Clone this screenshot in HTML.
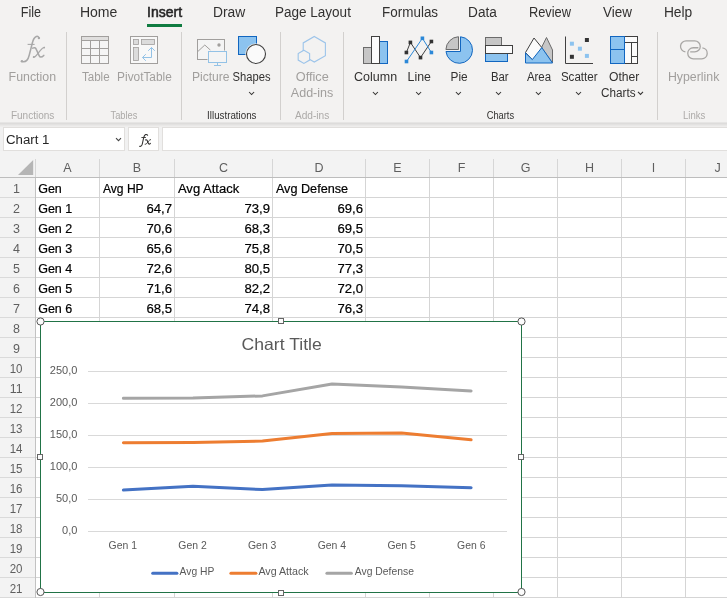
<!DOCTYPE html>
<html><head><meta charset="utf-8"><title>Excel</title>
<style>html,body{margin:0;padding:0;background:#fff;overflow:hidden;} svg{display:block;will-change:transform;font-family:"Liberation Sans",sans-serif;}</style>
</head><body>
<svg width="727" height="598" viewBox="0 0 727 598" font-family="Liberation Sans, sans-serif"><rect x="0" y="0" width="727" height="122" fill="#f3f2f1"/>
<rect x="0" y="122" width="727" height="1" fill="#e6e5e4"/>
<rect x="0" y="123" width="727" height="1" fill="#dddcdb"/>
<rect x="0" y="124" width="727" height="1" fill="#e3e2e1"/>
<rect x="0" y="125" width="727" height="1" fill="#e9e8e7"/>
<rect x="0" y="126" width="727" height="1" fill="#eeedec"/>
<rect x="0" y="127" width="727" height="24" fill="#f1f1f1"/>
<rect x="0" y="151" width="727" height="27" fill="#f3f3f3"/>
<rect x="0" y="178" width="35" height="420" fill="#f3f3f3"/>
<rect x="36" y="178" width="691" height="420" fill="#ffffff"/>
<text x="20.8" y="17.3" font-size="14" fill="#323130" textLength="20.3" lengthAdjust="spacingAndGlyphs">File</text>
<text x="79.9" y="17.3" font-size="14" fill="#323130" textLength="37.5" lengthAdjust="spacingAndGlyphs">Home</text>
<text x="147.0" y="17.3" font-size="14" fill="#262626" textLength="35.1" lengthAdjust="spacingAndGlyphs" stroke="#262626" stroke-width="0.55">Insert</text>
<text x="212.9" y="17.3" font-size="14" fill="#323130" textLength="32.3" lengthAdjust="spacingAndGlyphs">Draw</text>
<text x="274.9" y="17.3" font-size="14" fill="#323130" textLength="76.0" lengthAdjust="spacingAndGlyphs">Page Layout</text>
<text x="382.1" y="17.3" font-size="14" fill="#323130" textLength="56.0" lengthAdjust="spacingAndGlyphs">Formulas</text>
<text x="468.1" y="17.3" font-size="14" fill="#323130" textLength="28.8" lengthAdjust="spacingAndGlyphs">Data</text>
<text x="528.9" y="17.3" font-size="14" fill="#323130" textLength="42.1" lengthAdjust="spacingAndGlyphs">Review</text>
<text x="603.1" y="17.3" font-size="14" fill="#323130" textLength="28.9" lengthAdjust="spacingAndGlyphs">View</text>
<text x="663.9" y="17.3" font-size="14" fill="#323130" textLength="28.4" lengthAdjust="spacingAndGlyphs">Help</text>
<rect x="147" y="24" width="35" height="3" fill="#107c41"/>
<rect x="66.0" y="32" width="1" height="88" fill="#d2d0ce"/>
<rect x="181.0" y="32" width="1" height="88" fill="#d2d0ce"/>
<rect x="280.0" y="32" width="1" height="88" fill="#d2d0ce"/>
<rect x="343.0" y="32" width="1" height="88" fill="#d2d0ce"/>
<rect x="657.0" y="32" width="1" height="88" fill="#d2d0ce"/>
<text x="8.6" y="80.7" font-size="12" fill="#a19f9d" textLength="47.5" lengthAdjust="spacingAndGlyphs">Function</text>
<text x="81.9" y="80.7" font-size="12" fill="#a19f9d" textLength="27.7" lengthAdjust="spacingAndGlyphs">Table</text>
<text x="117.1" y="80.7" font-size="12" fill="#a19f9d" textLength="54.7" lengthAdjust="spacingAndGlyphs">PivotTable</text>
<text x="191.9" y="80.7" font-size="12" fill="#a19f9d" textLength="37.7" lengthAdjust="spacingAndGlyphs">Picture</text>
<text x="232.6" y="80.7" font-size="12" fill="#323130" textLength="38.0" lengthAdjust="spacingAndGlyphs">Shapes</text>
<text x="295.8" y="80.7" font-size="12" fill="#a19f9d" textLength="33.0" lengthAdjust="spacingAndGlyphs">Office</text>
<text x="290.8" y="96.6" font-size="12" fill="#a19f9d" textLength="42.5" lengthAdjust="spacingAndGlyphs">Add-ins</text>
<text x="354.1" y="80.7" font-size="12" fill="#323130" textLength="43.0" lengthAdjust="spacingAndGlyphs">Column</text>
<text x="407.6" y="80.7" font-size="12" fill="#323130" textLength="23.3" lengthAdjust="spacingAndGlyphs">Line</text>
<text x="450.6" y="80.7" font-size="12" fill="#323130" textLength="17.1" lengthAdjust="spacingAndGlyphs">Pie</text>
<text x="490.9" y="80.7" font-size="12" fill="#323130" textLength="17.7" lengthAdjust="spacingAndGlyphs">Bar</text>
<text x="526.9" y="80.7" font-size="12" fill="#323130" textLength="24.2" lengthAdjust="spacingAndGlyphs">Area</text>
<text x="560.9" y="80.7" font-size="12" fill="#323130" textLength="36.7" lengthAdjust="spacingAndGlyphs">Scatter</text>
<text x="609.0" y="80.7" font-size="12" fill="#323130" textLength="30.4" lengthAdjust="spacingAndGlyphs">Other</text>
<text x="601.1" y="96.6" font-size="12" fill="#323130" textLength="34.5" lengthAdjust="spacingAndGlyphs">Charts</text>
<text x="667.9" y="80.7" font-size="12" fill="#a19f9d" textLength="51.5" lengthAdjust="spacingAndGlyphs">Hyperlink</text>
<text x="10.9" y="118.6" font-size="10" fill="#acaaa8" textLength="43.4" lengthAdjust="spacingAndGlyphs">Functions</text>
<text x="110.5" y="118.6" font-size="10" fill="#acaaa8" textLength="26.9" lengthAdjust="spacingAndGlyphs">Tables</text>
<text x="207.1" y="118.6" font-size="10" fill="#323130" textLength="49.4" lengthAdjust="spacingAndGlyphs">Illustrations</text>
<text x="294.9" y="118.6" font-size="10" fill="#acaaa8" textLength="34.4" lengthAdjust="spacingAndGlyphs">Add-ins</text>
<text x="486.7" y="118.6" font-size="10" fill="#323130" textLength="27.4" lengthAdjust="spacingAndGlyphs">Charts</text>
<text x="683.0" y="118.6" font-size="10" fill="#acaaa8" textLength="22.3" lengthAdjust="spacingAndGlyphs">Links</text>
<path d="M249.1,92.0 L251.6,94.5 L254.1,92.0" fill="none" stroke="#323130" stroke-width="1.05"/>
<path d="M372.9,92.0 L375.4,94.5 L377.9,92.0" fill="none" stroke="#323130" stroke-width="1.05"/>
<path d="M416.1,92.0 L418.6,94.5 L421.1,92.0" fill="none" stroke="#323130" stroke-width="1.05"/>
<path d="M455.9,92.0 L458.4,94.5 L460.9,92.0" fill="none" stroke="#323130" stroke-width="1.05"/>
<path d="M496.0,92.0 L498.5,94.5 L501.0,92.0" fill="none" stroke="#323130" stroke-width="1.05"/>
<path d="M535.9,92.0 L538.4,94.5 L540.9,92.0" fill="none" stroke="#323130" stroke-width="1.05"/>
<path d="M576.0,92.0 L578.5,94.5 L581.0,92.0" fill="none" stroke="#323130" stroke-width="1.05"/>
<path d="M638.0,91.9 L640.5,94.4 L643.0,91.9" fill="none" stroke="#323130" stroke-width="1.05"/>
<path d="M38.9,37.6 C38.3,36.4 37.3,36.1 36.3,36.5 C34.2,37.4 33.1,39.8 32.4,42.8 L29.2,55.2 C28.2,59.3 25.6,62.3 22.2,61.6" fill="none" stroke="#a8a8a8" stroke-width="1.5" stroke-linecap="round"/>
<circle cx="38.9" cy="38.1" r="1.2" fill="#a8a8a8"/>
<circle cx="21.9" cy="61.3" r="1.2" fill="#a8a8a8"/>
<path d="M27.6,44.4 H34.6" fill="none" stroke="#a8a8a8" stroke-width="1.1"/>
<path d="M32.6,48.2 C34.4,47.2 35.6,47.6 36.4,49.6 L39.1,55.6 C39.9,57.4 41.4,57.9 43.8,55.4" fill="none" stroke="#a8a8a8" stroke-width="1.5" stroke-linecap="round"/>
<path d="M44.4,47.4 C43,47.6 42,48.4 40.2,50.6 L36.4,55.4 C35.4,56.7 34.4,57.2 33.4,57" fill="none" stroke="#a8a8a8" stroke-width="1.2" stroke-linecap="round"/>
<circle cx="44.2" cy="47.6" r="0.9" fill="#a8a8a8"/>
<circle cx="33.8" cy="56.9" r="1.0" fill="#a8a8a8"/>
<rect x="81.5" y="36.5" width="27" height="27" fill="#f5f5f5" stroke="#a19f9d"/>
<rect x="82" y="37" width="26" height="3.5" fill="#e0dfde"/>
<path d="M82,40.5 H108 M82,48.5 H108 M82,55.5 H108 M90.5,40.5 V63 M99.5,40.5 V63" stroke="#a19f9d" stroke-width="1" fill="none"/>
<rect x="130.5" y="36.5" width="27" height="27" fill="#f8f8f8" stroke="#a19f9d"/>
<rect x="133.5" y="39.5" width="5" height="5" fill="#dcdcdc" stroke="#a19f9d" stroke-width="0.8"/>
<rect x="141.5" y="39.5" width="13" height="5" fill="#dcdcdc" stroke="#a19f9d" stroke-width="0.8"/>
<rect x="133.5" y="47.5" width="5" height="13" fill="#dcdcdc" stroke="#a19f9d" stroke-width="0.8"/>
<path d="M142.5,57.5 H151.5 V47.5 M145.8,54.2 L142.5,57.5 L145.8,60.8 M148.2,50.8 L151.5,47.5 L154.8,50.8" stroke="#93c2e6" stroke-width="1" fill="none"/>
<rect x="197.5" y="39.5" width="27" height="20" fill="#f4f4f4" stroke="#a19f9d"/>
<path d="M197.5,51.8 L204.8,45 L210.5,50.2" stroke="#a19f9d" fill="none"/>
<circle cx="219" cy="45" r="1.7" fill="#a19f9d"/>
<rect x="207.5" y="50.5" width="20" height="13" fill="#f3f2f1"/>
<rect x="208.5" y="51.5" width="18" height="11" fill="#f4f4f4" stroke="#93c2e6"/>
<path d="M217.5,63 V65 M214,65.5 H221" stroke="#93c2e6" fill="none"/>
<rect x="238.5" y="36.5" width="18" height="18" fill="#8cc3ef" stroke="#1166c0" stroke-width="1"/>
<circle cx="256" cy="54" r="10.6" fill="#f3f2f1"/>
<circle cx="256" cy="54" r="9.5" fill="#fafafa" stroke="#404040" stroke-width="1.1"/>
<path d="M314.30,36.50 L325.39,42.90 L325.39,55.70 L314.30,62.10 L303.21,55.70 L303.21,42.90Z" fill="none" stroke="#9cc4ea" stroke-width="1.1"/>
<path d="M303.90,50.20 L309.62,53.50 L309.62,60.10 L303.90,63.40 L298.18,60.10 L298.18,53.50Z" fill="#f3f2f1" stroke="#9cc4ea" stroke-width="1.1"/>
<rect x="363.5" y="47.5" width="8" height="16" fill="#c6c6c6" stroke="#6b6b6b"/>
<rect x="379.5" y="41.5" width="8" height="22" fill="#8cc3ef" stroke="#1166c0"/>
<rect x="371.5" y="36.5" width="8" height="27" fill="#fbfbfb" stroke="#404040"/>
<path d="M406.4,52.5 L410.4,42.4 L420.5,57.6 L431.4,41.5" fill="none" stroke="#404040" stroke-width="1"/>
<path d="M406.5,61.5 L422.4,38.3 L431.4,52.5" fill="none" stroke="#2b88d8" stroke-width="1"/>
<rect x="404.6" y="50.7" width="3.6" height="3.6" fill="#333"/>
<rect x="408.6" y="40.6" width="3.6" height="3.6" fill="#333"/>
<rect x="418.7" y="55.8" width="3.6" height="3.6" fill="#333"/>
<rect x="429.6" y="39.7" width="3.6" height="3.6" fill="#333"/>
<rect x="404.7" y="59.7" width="3.6" height="3.6" fill="#2b88d8"/>
<rect x="420.6" y="36.5" width="3.6" height="3.6" fill="#2b88d8"/>
<rect x="429.6" y="50.7" width="3.6" height="3.6" fill="#2b88d8"/>
<path d="M460.5,36.76 A13.3,13.3 0 1 1 445.98,51.5 L460.5,51.5 Z" fill="#8cc3ef" stroke="#1166c0" stroke-width="1"/>
<path d="M458.5,49.5 V36.72 A13.3,13.3 0 0 0 445.91,49.5 Z" fill="#c6c6c6" stroke="#6b6b6b" stroke-width="1"/>
<rect x="485.5" y="37.5" width="16" height="8" fill="#c6c6c6" stroke="#6b6b6b"/>
<rect x="485.5" y="53.5" width="22" height="8" fill="#8cc3ef" stroke="#1166c0"/>
<rect x="485.5" y="45.5" width="27" height="8" fill="#fbfbfb" stroke="#404040"/>
<path d="M541.5,47.5 L546.5,37.5 L552.5,50 V63 Z" fill="#c6c6c6" stroke="#6b6b6b"/>
<path d="M525.5,52.5 L534,38 L541.8,47.6 L538,56 L532.3,59.6 Z" fill="#fbfbfb" stroke="#404040"/>
<path d="M525.5,53 L532.3,59.6 L541.8,47.6 L552.5,63 H525.5 Z" fill="#8cc3ef" stroke="#1166c0"/>
<path d="M565.5,36.5 V63.5 H593" fill="none" stroke="#404040"/>
<rect x="569.9" y="41.7" width="4" height="4" fill="#8cc3ef"/>
<rect x="577.9" y="46.7" width="4" height="4" fill="#8cc3ef"/>
<rect x="584.9" y="53.9" width="4" height="4" fill="#8cc3ef"/>
<rect x="584.9" y="38" width="4" height="4" fill="#333"/>
<rect x="569.9" y="54.8" width="4" height="4" fill="#333"/>
<rect x="610.5" y="36.5" width="27" height="27" fill="#fbfbfb" stroke="#404040"/>
<rect x="610.5" y="36.5" width="14" height="27" fill="#8cc3ef" stroke="#1166c0"/>
<path d="M610.5,49.5 H624.5" stroke="#1166c0"/>
<path d="M625,42.5 H637.5 M631.5,42.5 V63.5 M631.5,56.5 H637.5" stroke="#404040" fill="none"/>
<path d="M685.4,51.9 A5.55,5.55 0 0 1 686.4,40.85 H694.7 A5.55,5.55 0 0 1 694.7,51.95 H690.2" fill="none" stroke="#a8a6a4" stroke-width="1.3"/>
<path d="M698.4,47.75 H693.3 A5.55,5.55 0 0 0 693.3,58.85 H701.8 A5.55,5.55 0 0 0 702.4,47.8" fill="none" stroke="#a8a6a4" stroke-width="1.3"/>
<rect x="3.5" y="127.5" width="121" height="23" fill="#fff" stroke="#e1dfdd"/>
<text x="6.0" y="144" font-size="12.5" fill="#262626" textLength="43.5" lengthAdjust="spacingAndGlyphs">Chart 1</text>
<path d="M116,138.2 L118.5,140.7 L121,138.2" fill="none" stroke="#444" stroke-width="1.1"/>
<rect x="128.5" y="127.5" width="30" height="23" fill="#fff" stroke="#e1dfdd"/>
<path d="M147.6,135.2 C147.2,134.5 146.4,134.3 145.6,134.6 C144.6,135.1 144,136.4 143.6,138 L142.3,144 C141.9,145.8 140.8,146.6 139.6,146.3" fill="none" stroke="#323130" stroke-width="1.1" stroke-linecap="round"/>
<path d="M141.4,137.5 H145.9" fill="none" stroke="#323130" stroke-width="0.9"/>
<path d="M145.4,139.9 C146.3,139.5 146.9,139.8 147.3,140.7 L148.3,143.3 C148.7,144.3 149.5,144.4 150.4,143.4" fill="none" stroke="#323130" stroke-width="1.1" stroke-linecap="round"/>
<path d="M150.6,139.6 C149.8,139.8 149.3,140.3 148.4,141.3 L146.8,143.4 C146.3,144.1 145.7,144.4 145.1,144.3" fill="none" stroke="#323130" stroke-width="0.9" stroke-linecap="round"/>
<rect x="162.5" y="127.5" width="570" height="23" fill="#fff" stroke="#e1dfdd"/>
<rect x="99" y="159" width="1" height="19" fill="#d6d6d6"/>
<rect x="174" y="159" width="1" height="19" fill="#d6d6d6"/>
<rect x="272" y="159" width="1" height="19" fill="#d6d6d6"/>
<rect x="365" y="159" width="1" height="19" fill="#d6d6d6"/>
<rect x="429" y="159" width="1" height="19" fill="#d6d6d6"/>
<rect x="493" y="159" width="1" height="19" fill="#d6d6d6"/>
<rect x="557" y="159" width="1" height="19" fill="#d6d6d6"/>
<rect x="621" y="159" width="1" height="19" fill="#d6d6d6"/>
<rect x="685" y="159" width="1" height="19" fill="#d6d6d6"/>
<rect x="749" y="159" width="1" height="19" fill="#d6d6d6"/>
<rect x="35" y="159" width="1" height="18" fill="#d6d6d6"/>
<rect x="35" y="178" width="1" height="420" fill="#c2c2c2"/>
<rect x="0" y="177" width="727" height="1" fill="#bdbdbd"/>
<path d="M33.2,160 V175 H18 Z" fill="#b5b5b5"/>
<text x="67.5" y="172" font-size="12.5" fill="#5f5f5f" text-anchor="middle">A</text>
<text x="137.0" y="172" font-size="12.5" fill="#5f5f5f" text-anchor="middle">B</text>
<text x="223.5" y="172" font-size="12.5" fill="#5f5f5f" text-anchor="middle">C</text>
<text x="319.0" y="172" font-size="12.5" fill="#5f5f5f" text-anchor="middle">D</text>
<text x="397.5" y="172" font-size="12.5" fill="#5f5f5f" text-anchor="middle">E</text>
<text x="461.5" y="172" font-size="12.5" fill="#5f5f5f" text-anchor="middle">F</text>
<text x="525.5" y="172" font-size="12.5" fill="#5f5f5f" text-anchor="middle">G</text>
<text x="589.5" y="172" font-size="12.5" fill="#5f5f5f" text-anchor="middle">H</text>
<text x="653.5" y="172" font-size="12.5" fill="#5f5f5f" text-anchor="middle">I</text>
<text x="717.5" y="172" font-size="12.5" fill="#5f5f5f" text-anchor="middle">J</text>
<rect x="99" y="178" width="1" height="420" fill="#d5d5d5"/>
<rect x="174" y="178" width="1" height="420" fill="#d5d5d5"/>
<rect x="272" y="178" width="1" height="420" fill="#d5d5d5"/>
<rect x="365" y="178" width="1" height="420" fill="#d5d5d5"/>
<rect x="429" y="178" width="1" height="420" fill="#d5d5d5"/>
<rect x="493" y="178" width="1" height="420" fill="#d5d5d5"/>
<rect x="557" y="178" width="1" height="420" fill="#d5d5d5"/>
<rect x="621" y="178" width="1" height="420" fill="#d5d5d5"/>
<rect x="685" y="178" width="1" height="420" fill="#d5d5d5"/>
<rect x="749" y="178" width="1" height="420" fill="#d5d5d5"/>
<rect x="0" y="197" width="35" height="1" fill="#dadada"/>
<rect x="36" y="197" width="691" height="1" fill="#d5d5d5"/>
<text x="16.5" y="192.9" font-size="12.5" fill="#5f5f5f" text-anchor="middle">1</text>
<rect x="0" y="217" width="35" height="1" fill="#dadada"/>
<rect x="36" y="217" width="691" height="1" fill="#d5d5d5"/>
<text x="16.5" y="212.9" font-size="12.5" fill="#5f5f5f" text-anchor="middle">2</text>
<rect x="0" y="237" width="35" height="1" fill="#dadada"/>
<rect x="36" y="237" width="691" height="1" fill="#d5d5d5"/>
<text x="16.5" y="232.9" font-size="12.5" fill="#5f5f5f" text-anchor="middle">3</text>
<rect x="0" y="257" width="35" height="1" fill="#dadada"/>
<rect x="36" y="257" width="691" height="1" fill="#d5d5d5"/>
<text x="16.5" y="252.9" font-size="12.5" fill="#5f5f5f" text-anchor="middle">4</text>
<rect x="0" y="277" width="35" height="1" fill="#dadada"/>
<rect x="36" y="277" width="691" height="1" fill="#d5d5d5"/>
<text x="16.5" y="272.9" font-size="12.5" fill="#5f5f5f" text-anchor="middle">5</text>
<rect x="0" y="297" width="35" height="1" fill="#dadada"/>
<rect x="36" y="297" width="691" height="1" fill="#d5d5d5"/>
<text x="16.5" y="292.9" font-size="12.5" fill="#5f5f5f" text-anchor="middle">6</text>
<rect x="0" y="317" width="35" height="1" fill="#dadada"/>
<rect x="36" y="317" width="691" height="1" fill="#d5d5d5"/>
<text x="16.5" y="312.9" font-size="12.5" fill="#5f5f5f" text-anchor="middle">7</text>
<rect x="0" y="337" width="35" height="1" fill="#dadada"/>
<rect x="36" y="337" width="691" height="1" fill="#d5d5d5"/>
<text x="16.5" y="332.9" font-size="12.5" fill="#5f5f5f" text-anchor="middle">8</text>
<rect x="0" y="357" width="35" height="1" fill="#dadada"/>
<rect x="36" y="357" width="691" height="1" fill="#d5d5d5"/>
<text x="16.5" y="352.9" font-size="12.5" fill="#5f5f5f" text-anchor="middle">9</text>
<rect x="0" y="377" width="35" height="1" fill="#dadada"/>
<rect x="36" y="377" width="691" height="1" fill="#d5d5d5"/>
<text x="9.7" y="372.9" font-size="12.5" fill="#5f5f5f" textLength="12.8" lengthAdjust="spacingAndGlyphs">10</text>
<rect x="0" y="397" width="35" height="1" fill="#dadada"/>
<rect x="36" y="397" width="691" height="1" fill="#d5d5d5"/>
<text x="9.7" y="392.9" font-size="12.5" fill="#5f5f5f" textLength="12.8" lengthAdjust="spacingAndGlyphs">11</text>
<rect x="0" y="417" width="35" height="1" fill="#dadada"/>
<rect x="36" y="417" width="691" height="1" fill="#d5d5d5"/>
<text x="9.7" y="412.9" font-size="12.5" fill="#5f5f5f" textLength="12.8" lengthAdjust="spacingAndGlyphs">12</text>
<rect x="0" y="437" width="35" height="1" fill="#dadada"/>
<rect x="36" y="437" width="691" height="1" fill="#d5d5d5"/>
<text x="9.7" y="432.9" font-size="12.5" fill="#5f5f5f" textLength="12.8" lengthAdjust="spacingAndGlyphs">13</text>
<rect x="0" y="457" width="35" height="1" fill="#dadada"/>
<rect x="36" y="457" width="691" height="1" fill="#d5d5d5"/>
<text x="9.7" y="452.9" font-size="12.5" fill="#5f5f5f" textLength="12.8" lengthAdjust="spacingAndGlyphs">14</text>
<rect x="0" y="477" width="35" height="1" fill="#dadada"/>
<rect x="36" y="477" width="691" height="1" fill="#d5d5d5"/>
<text x="9.7" y="472.9" font-size="12.5" fill="#5f5f5f" textLength="12.8" lengthAdjust="spacingAndGlyphs">15</text>
<rect x="0" y="497" width="35" height="1" fill="#dadada"/>
<rect x="36" y="497" width="691" height="1" fill="#d5d5d5"/>
<text x="9.7" y="492.9" font-size="12.5" fill="#5f5f5f" textLength="12.8" lengthAdjust="spacingAndGlyphs">16</text>
<rect x="0" y="517" width="35" height="1" fill="#dadada"/>
<rect x="36" y="517" width="691" height="1" fill="#d5d5d5"/>
<text x="9.7" y="512.9" font-size="12.5" fill="#5f5f5f" textLength="12.8" lengthAdjust="spacingAndGlyphs">17</text>
<rect x="0" y="537" width="35" height="1" fill="#dadada"/>
<rect x="36" y="537" width="691" height="1" fill="#d5d5d5"/>
<text x="9.7" y="532.9" font-size="12.5" fill="#5f5f5f" textLength="12.8" lengthAdjust="spacingAndGlyphs">18</text>
<rect x="0" y="557" width="35" height="1" fill="#dadada"/>
<rect x="36" y="557" width="691" height="1" fill="#d5d5d5"/>
<text x="9.7" y="552.9" font-size="12.5" fill="#5f5f5f" textLength="12.8" lengthAdjust="spacingAndGlyphs">19</text>
<rect x="0" y="577" width="35" height="1" fill="#dadada"/>
<rect x="36" y="577" width="691" height="1" fill="#d5d5d5"/>
<text x="9.7" y="572.9" font-size="12.5" fill="#5f5f5f" textLength="12.8" lengthAdjust="spacingAndGlyphs">20</text>
<rect x="0" y="597" width="35" height="1" fill="#dadada"/>
<rect x="36" y="597" width="691" height="1" fill="#d5d5d5"/>
<text x="9.7" y="592.9" font-size="12.5" fill="#5f5f5f" textLength="12.8" lengthAdjust="spacingAndGlyphs">21</text>
<text x="38.2" y="193.1" font-size="12.5" fill="#000000" stroke="#000" stroke-width="0.2">Gen</text>
<text x="102.9" y="193.1" font-size="12.5" fill="#000000" textLength="40.800000000000004" lengthAdjust="spacingAndGlyphs" stroke="#000" stroke-width="0.2">Avg HP</text>
<text x="177.9" y="193.1" font-size="12.5" fill="#000000" textLength="61.4" lengthAdjust="spacingAndGlyphs" stroke="#000" stroke-width="0.2">Avg Attack</text>
<text x="275.9" y="193.1" font-size="12.5" fill="#000000" textLength="72.19999999999999" lengthAdjust="spacingAndGlyphs" stroke="#000" stroke-width="0.2">Avg Defense</text>
<text x="38.2" y="213.1" font-size="12.5" fill="#000000" stroke="#000" stroke-width="0.2">Gen 1</text>
<text x="172.0" y="213.1" font-size="12.5" fill="#000000" textLength="25.6" lengthAdjust="spacingAndGlyphs" text-anchor="end" stroke="#000" stroke-width="0.2">64,7</text>
<text x="270.0" y="213.1" font-size="12.5" fill="#000000" textLength="25.6" lengthAdjust="spacingAndGlyphs" text-anchor="end" stroke="#000" stroke-width="0.2">73,9</text>
<text x="363.0" y="213.1" font-size="12.5" fill="#000000" textLength="25.6" lengthAdjust="spacingAndGlyphs" text-anchor="end" stroke="#000" stroke-width="0.2">69,6</text>
<text x="38.2" y="233.1" font-size="12.5" fill="#000000" stroke="#000" stroke-width="0.2">Gen 2</text>
<text x="172.0" y="233.1" font-size="12.5" fill="#000000" textLength="25.6" lengthAdjust="spacingAndGlyphs" text-anchor="end" stroke="#000" stroke-width="0.2">70,6</text>
<text x="270.0" y="233.1" font-size="12.5" fill="#000000" textLength="25.6" lengthAdjust="spacingAndGlyphs" text-anchor="end" stroke="#000" stroke-width="0.2">68,3</text>
<text x="363.0" y="233.1" font-size="12.5" fill="#000000" textLength="25.6" lengthAdjust="spacingAndGlyphs" text-anchor="end" stroke="#000" stroke-width="0.2">69,5</text>
<text x="38.2" y="253.1" font-size="12.5" fill="#000000" stroke="#000" stroke-width="0.2">Gen 3</text>
<text x="172.0" y="253.1" font-size="12.5" fill="#000000" textLength="25.6" lengthAdjust="spacingAndGlyphs" text-anchor="end" stroke="#000" stroke-width="0.2">65,6</text>
<text x="270.0" y="253.1" font-size="12.5" fill="#000000" textLength="25.6" lengthAdjust="spacingAndGlyphs" text-anchor="end" stroke="#000" stroke-width="0.2">75,8</text>
<text x="363.0" y="253.1" font-size="12.5" fill="#000000" textLength="25.6" lengthAdjust="spacingAndGlyphs" text-anchor="end" stroke="#000" stroke-width="0.2">70,5</text>
<text x="38.2" y="273.1" font-size="12.5" fill="#000000" stroke="#000" stroke-width="0.2">Gen 4</text>
<text x="172.0" y="273.1" font-size="12.5" fill="#000000" textLength="25.6" lengthAdjust="spacingAndGlyphs" text-anchor="end" stroke="#000" stroke-width="0.2">72,6</text>
<text x="270.0" y="273.1" font-size="12.5" fill="#000000" textLength="25.6" lengthAdjust="spacingAndGlyphs" text-anchor="end" stroke="#000" stroke-width="0.2">80,5</text>
<text x="363.0" y="273.1" font-size="12.5" fill="#000000" textLength="25.6" lengthAdjust="spacingAndGlyphs" text-anchor="end" stroke="#000" stroke-width="0.2">77,3</text>
<text x="38.2" y="293.1" font-size="12.5" fill="#000000" stroke="#000" stroke-width="0.2">Gen 5</text>
<text x="172.0" y="293.1" font-size="12.5" fill="#000000" textLength="25.6" lengthAdjust="spacingAndGlyphs" text-anchor="end" stroke="#000" stroke-width="0.2">71,6</text>
<text x="270.0" y="293.1" font-size="12.5" fill="#000000" textLength="25.6" lengthAdjust="spacingAndGlyphs" text-anchor="end" stroke="#000" stroke-width="0.2">82,2</text>
<text x="363.0" y="293.1" font-size="12.5" fill="#000000" textLength="25.6" lengthAdjust="spacingAndGlyphs" text-anchor="end" stroke="#000" stroke-width="0.2">72,0</text>
<text x="38.2" y="313.1" font-size="12.5" fill="#000000" stroke="#000" stroke-width="0.2">Gen 6</text>
<text x="172.0" y="313.1" font-size="12.5" fill="#000000" textLength="25.6" lengthAdjust="spacingAndGlyphs" text-anchor="end" stroke="#000" stroke-width="0.2">68,5</text>
<text x="270.0" y="313.1" font-size="12.5" fill="#000000" textLength="25.6" lengthAdjust="spacingAndGlyphs" text-anchor="end" stroke="#000" stroke-width="0.2">74,8</text>
<text x="363.0" y="313.1" font-size="12.5" fill="#000000" textLength="25.6" lengthAdjust="spacingAndGlyphs" text-anchor="end" stroke="#000" stroke-width="0.2">76,3</text>
<rect x="40.5" y="321.5" width="481" height="271" fill="#ffffff" stroke="#217346" stroke-width="1"/>
<text x="241.6" y="349.7" font-size="16.5" fill="#595959" textLength="80.2" lengthAdjust="spacingAndGlyphs">Chart Title</text>
<rect x="88" y="371" width="419" height="1" fill="#d9d9d9"/>
<text x="77.4" y="374.3" font-size="11" fill="#595959" text-anchor="end">250,0</text>
<rect x="88" y="403" width="419" height="1" fill="#d9d9d9"/>
<text x="77.4" y="406.3" font-size="11" fill="#595959" text-anchor="end">200,0</text>
<rect x="88" y="435" width="419" height="1" fill="#d9d9d9"/>
<text x="77.4" y="438.3" font-size="11" fill="#595959" text-anchor="end">150,0</text>
<rect x="88" y="467" width="419" height="1" fill="#d9d9d9"/>
<text x="77.4" y="470.3" font-size="11" fill="#595959" text-anchor="end">100,0</text>
<rect x="88" y="499" width="419" height="1" fill="#d9d9d9"/>
<text x="77.4" y="502.3" font-size="11" fill="#595959" text-anchor="end">50,0</text>
<rect x="88" y="531" width="419" height="1" fill="#d9d9d9"/>
<text x="77.4" y="534.3" font-size="11" fill="#595959" text-anchor="end">0,0</text>
<text x="108.6" y="549" font-size="11" fill="#595959" textLength="28.4" lengthAdjust="spacingAndGlyphs">Gen 1</text>
<text x="178.3" y="549" font-size="11" fill="#595959" textLength="28.4" lengthAdjust="spacingAndGlyphs">Gen 2</text>
<text x="248.0" y="549" font-size="11" fill="#595959" textLength="28.4" lengthAdjust="spacingAndGlyphs">Gen 3</text>
<text x="317.7" y="549" font-size="11" fill="#595959" textLength="28.4" lengthAdjust="spacingAndGlyphs">Gen 4</text>
<text x="387.4" y="549" font-size="11" fill="#595959" textLength="28.4" lengthAdjust="spacingAndGlyphs">Gen 5</text>
<text x="457.1" y="549" font-size="11" fill="#595959" textLength="28.4" lengthAdjust="spacingAndGlyphs">Gen 6</text>
<polyline points="123.40,398.25 192.94,398.12 262.48,395.88 332.02,384.04 401.56,386.99 471.10,390.96" fill="none" stroke="#a5a5a5" stroke-width="3" stroke-linecap="round" stroke-linejoin="round"/>
<polyline points="123.40,442.80 192.94,442.60 262.48,441.00 332.02,433.52 401.56,433.07 471.10,439.79" fill="none" stroke="#ed7d31" stroke-width="3" stroke-linecap="round" stroke-linejoin="round"/>
<polyline points="123.40,490.09 192.94,486.32 262.48,489.52 332.02,485.04 401.56,485.68 471.10,487.66" fill="none" stroke="#4472c4" stroke-width="3" stroke-linecap="round" stroke-linejoin="round"/>
<path d="M152.7,573.2 H176.9" stroke="#4472c4" stroke-width="3" stroke-linecap="round"/>
<text x="179.6" y="575" font-size="11" fill="#595959" textLength="34.7" lengthAdjust="spacingAndGlyphs">Avg HP</text>
<path d="M230.9,573.2 H255.89999999999998" stroke="#ed7d31" stroke-width="3" stroke-linecap="round"/>
<text x="258.40000000000003" y="575" font-size="11" fill="#595959" textLength="50.3" lengthAdjust="spacingAndGlyphs">Avg Attack</text>
<path d="M326.9,573.2 H351.4" stroke="#a5a5a5" stroke-width="3" stroke-linecap="round"/>
<text x="354.8" y="575" font-size="11" fill="#595959" textLength="59.1" lengthAdjust="spacingAndGlyphs">Avg Defense</text>
<circle cx="40.5" cy="321.5" r="3.6" fill="#fcfcfc" stroke="#555" stroke-width="1"/>
<circle cx="521.5" cy="321.5" r="3.6" fill="#fcfcfc" stroke="#555" stroke-width="1"/>
<circle cx="40.5" cy="592" r="3.6" fill="#fcfcfc" stroke="#555" stroke-width="1"/>
<circle cx="521.5" cy="592" r="3.6" fill="#fcfcfc" stroke="#555" stroke-width="1"/>
<rect x="278.5" y="318.5" width="5" height="5" fill="#fcfcfc" stroke="#656565" stroke-width="1"/>
<rect x="278.5" y="590.5" width="5" height="5" fill="#fcfcfc" stroke="#656565" stroke-width="1"/>
<rect x="37.5" y="454.5" width="5" height="5" fill="#fcfcfc" stroke="#656565" stroke-width="1"/>
<rect x="518.5" y="454.5" width="5" height="5" fill="#fcfcfc" stroke="#656565" stroke-width="1"/></svg>
</body></html>
